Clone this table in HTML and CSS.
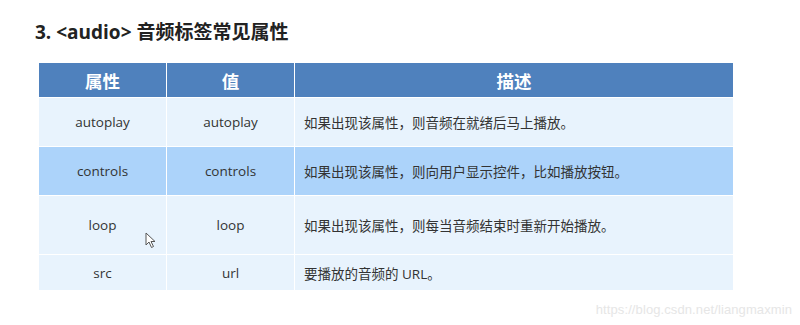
FILE: index.html
```html
<!DOCTYPE html>
<html>
	<head>
		<meta charset="utf-8">
		<title>audio 音频标签常见属性</title>
		<link rel="stylesheet" href="styles.css">
	</head>
	<body>
		<div class="page">
			<h3 class="title">3. &lt;audio&gt; 音频标签常见属性</h3>
			<table class="attrs">
				<tr class="head">
					<th class="c1">属性</th>
					<th class="c2">值</th>
					<th class="c3">描述</th>
				</tr>
				<tr class="r1">
					<td>autoplay</td>
					<td>autoplay</td>
					<td class="desc">如果出现该属性，则音频在就绪后马上播放。</td>
				</tr>
				<tr class="r2 hl">
					<td>controls</td>
					<td>controls</td>
					<td class="desc">如果出现该属性，则向用户显示控件，比如播放按钮。</td>
				</tr>
				<tr class="r3">
					<td>loop</td>
					<td>loop</td>
					<td class="desc">如果出现该属性，则每当音频结束时重新开始播放。</td>
				</tr>
				<tr class="r4">
					<td>src</td>
					<td>url</td>
					<td class="desc">要播放的音频的 URL。</td>
				</tr>
			</table>
			<svg class="cursor" width="12" height="17" viewBox="0 0 12 17">
				<path d="M1 1 L1 13 L4 10 L6.5 15.5 L8.5 14.5 L6 9.5 L10 9.5 Z" fill="#fff" stroke="#555" stroke-width="1" stroke-linejoin="round"/>
			</svg>
			<div class="mark">https://blog.csdn.net/liangmaxmin</div>
		</div>
	</body>
</html>
```

FILE: styles.css
```css
*{
	padding: 0;
	margin: 0;
}
body{
	background: #fff;
	font-family: "Open Sans", "Noto Sans CJK SC", sans-serif;
	color: #333;
}
.page{
	position: relative;
	width: 800px;
	height: 325px;
	padding: 20px 0 0 38px;
	box-sizing: border-box;
}
.title{
	font-size: 19px;
	font-weight: bold;
	color: #222;
	line-height: 24px;
	margin-left: -3px;
	margin-bottom: 18px;
}
.attrs{
	width: 696px;
	border-collapse: collapse;
	font-size: 13.5px;
}
.attrs th,
.attrs td{
	border: 1px solid #fff;
	text-align: center;
	vertical-align: middle;
}
.attrs th{
	background: #4f81bd;
	color: #fff;
	font-size: 17.5px;
	font-weight: bold;
	height: 34px;
}
.attrs .c1,
.attrs .c2{
	width: 127px;
}
.attrs td{
	background: #e8f3fd;
}
.attrs .hl td{
	background: #acd3fa;
}
.attrs td.desc{
	text-align: left;
	padding-left: 9px;
}
.r1 td{
	height: 48px;
}
.r2 td{
	height: 48px;
}
.r3 td{
	height: 58px;
}
.r4 td{
	height: 35px;
}
.cursor{
	position: absolute;
	left: 145px;
	top: 232px;
}
.mark{
	position: absolute;
	right: 8px;
	top: 302px;
	font-family: "Liberation Sans", sans-serif;
	font-size: 13px;
	letter-spacing: 0.1px;
	color: #e6e6e6;
}
```
